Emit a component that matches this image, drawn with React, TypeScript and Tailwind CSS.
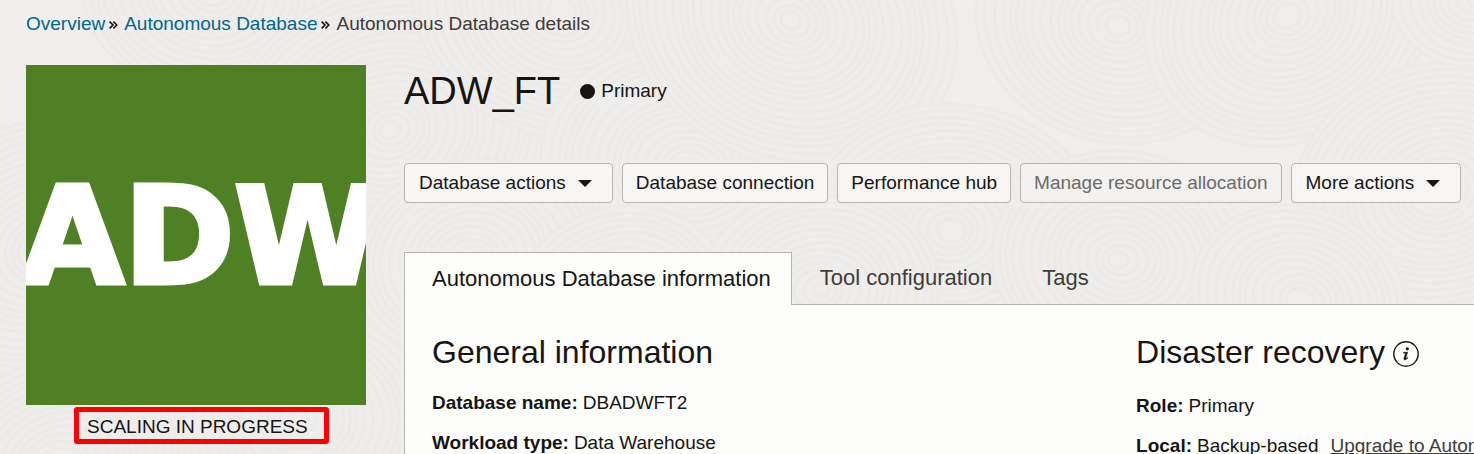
import React from "react";

const rosettes = [
  [40, 250, 150], [210, -10, 130], [390, 130, 170], [560, 10, 150], [300, 420, 170], [60, 470, 130],
  [690, 170, 150], [470, 260, 120], [790, 20, 170], [950, 230, 150], [620, 300, 110], [1116, 25, 140],
  [820, 290, 120], [1289, 15, 150], [1120, 260, 130], [1440, 190, 150], [1300, 300, 110], [1474, 0, 80],
];

function Texture() {
  return (
    <svg aria-hidden="true" className="absolute inset-0 -z-10 h-full w-full">
      {rosettes.map(([x, y, r], n) => (
        <g key={n} transform={`rotate(${(n * 37) % 60 - 30} ${x} ${y})`}>
          <ellipse cx={x} cy={y} rx={r} ry={r * 0.84} fill="#efeeec" />
          {Array.from({ length: Math.floor(r / 8) }, (_, i) => (
            <ellipse
              key={i}
              cx={x + Math.sin(i + n) * 2}
              cy={y}
              rx={r - i * 8}
              ry={(r - i * 8) * 0.84}
              fill="none"
              stroke="#ecebe9"
              strokeWidth="3"
            />
          ))}
        </g>
      ))}
    </svg>
  );
}

function Separator() {
  return (
    <svg aria-hidden="true" className="mr-1.5 ml-1 mt-0.5 h-2 w-[9px]" viewBox="0 0 9 8" fill="none" stroke="#161513" strokeWidth="1.6">
      <path d="M.6.6 4 4 .6 7.4M4.4.6 7.8 4 4.4 7.4" />
    </svg>
  );
}

function Caret() {
  return (
    <svg aria-hidden="true" className="mr-1.5 ml-3 h-[7px] w-3.5" viewBox="0 0 14 7" fill="#161513">
      <path d="M0 0h14L7 7z" />
    </svg>
  );
}

function ActionButton({ label, menu = false, disabled = false }: { label: string; menu?: boolean; disabled?: boolean }) {
  return (
    <button
      type="button"
      disabled={disabled}
      className={`flex h-10 shrink-0 items-center rounded border border-[#b8b4ae] bg-[#f7f6f5] whitespace-nowrap disabled:bg-[#f2f1f0] disabled:text-[#6d6b68] ${menu ? "px-3.5" : "px-[13px]"}`}
    >
      {label}
      {menu && <Caret />}
    </button>
  );
}

function Field({ name, children }: { name: string; children: React.ReactNode }) {
  return (
    <div className="flex gap-[5px] whitespace-nowrap">
      <dt className="font-bold">{name}:</dt>
      <dd>{children}</dd>
    </div>
  );
}

export default function App() {
  return (
    <div className="relative isolate h-screen overflow-hidden bg-[#f0efed] pl-[26px] font-['Liberation_Sans',Arial,sans-serif] text-[19px] leading-6 text-[#161513]">
      <Texture />
      <nav aria-label="Breadcrumb" className="flex items-center pt-3 whitespace-nowrap">
        <a href="#overview" className="text-[#00688c]">Overview</a>
        <Separator />
        <a href="#databases" className="text-[#00688c]">Autonomous Database</a>
        <Separator />
        <span className="text-[#403c38]">Autonomous Database details</span>
      </nav>

      <div className="mt-[29px] flex gap-[38px]">
        <aside className="w-[340px] shrink-0">
          <div className="flex aspect-square items-center justify-center overflow-hidden bg-[#4f8023] pt-1 pl-2.5 font-['DejaVu_Sans',sans-serif] text-[133px] leading-none font-bold text-white [-webkit-text-stroke:5px_white]">
            ADW
          </div>
          <div className="mt-0.5 ml-12 h-[37px] w-[255px] rounded-[3px] border-5 border-[#ff0000] pt-[3px] pl-2 whitespace-nowrap">
            SCALING IN PROGRESS
          </div>
        </aside>

        <main className="min-w-0 flex-1">
          <header className="flex items-center">
            <h1 className="text-[38px] leading-[52px]">ADW_FT</h1>
            <span className="ml-5 size-[15px] rounded-full bg-[#161513]" />
            <span className="ml-1.5">Primary</span>
          </header>

          <div className="mt-[46px] flex gap-[9px]">
            <ActionButton label="Database actions" menu />
            <ActionButton label="Database connection" />
            <ActionButton label="Performance hub" />
            <ActionButton label="Manage resource allocation" disabled />
            <ActionButton label="More actions" menu />
          </div>

          <div role="tablist" className="mt-[49px] flex text-[22px] text-[#403c38]">
            <button type="button" role="tab" aria-selected="true" className="z-10 -mb-px h-[53px] border border-b-0 border-[#b8b4ae] bg-[#fdfdfb] pr-5 pl-[27px] whitespace-nowrap text-[#161513]">
              Autonomous Database information
            </button>
            <button type="button" role="tab" aria-selected="false" className="pr-[22px] pl-7 whitespace-nowrap">Tool configuration</button>
            <button type="button" role="tab" aria-selected="false" className="pr-[22px] pl-7">Tags</button>
          </div>

          <div role="tabpanel" className="grid min-h-60 grid-cols-[minmax(0,25fr)_minmax(0,12fr)] border-t border-l border-[#b8b4ae] bg-[#fdfdfb] pt-[27px] pl-[27px]">
            <section>
              <h2 className="text-[32px] leading-10">General information</h2>
              <dl className="mt-[19px] flex flex-col gap-4">
                <Field name="Database name">DBADWFT2</Field>
                <Field name="Workload type">Data Warehouse</Field>
              </dl>
            </section>
            <section>
              <div className="flex items-center gap-2">
                <h2 className="text-[32px] leading-10 whitespace-nowrap">Disaster recovery</h2>
                <button type="button" aria-label="About disaster recovery" className="mt-1">
                  <svg className="size-[26px]" viewBox="0 0 26 26" fill="#161513">
                    <circle cx="13" cy="13" r="12.2" fill="none" stroke="#161513" strokeWidth="1.4" />
                    <circle cx="14.3" cy="7.8" r="1.6" />
                    <path d="M10.3 11.5 14.6 11 12.9 17c-.2.8.5.6 1.7-.6l.4.4c-1.8 2.4-4.5 2.9-4.1.8l1.3-4.7c.2-.7-.5-.8-1.9-.8z" stroke="#161513" strokeWidth=".5" />
                  </svg>
                </button>
              </div>
              <dl className="mt-[22px] flex flex-col gap-4">
                <Field name="Role">Primary</Field>
                <Field name="Local">
                  Backup-based
                  <a href="#upgrade" className="ml-3 text-[#403c38] underline">Upgrade to Autonomous Data Guard</a>
                </Field>
              </dl>
            </section>
          </div>
        </main>
      </div>
    </div>
  );
}
